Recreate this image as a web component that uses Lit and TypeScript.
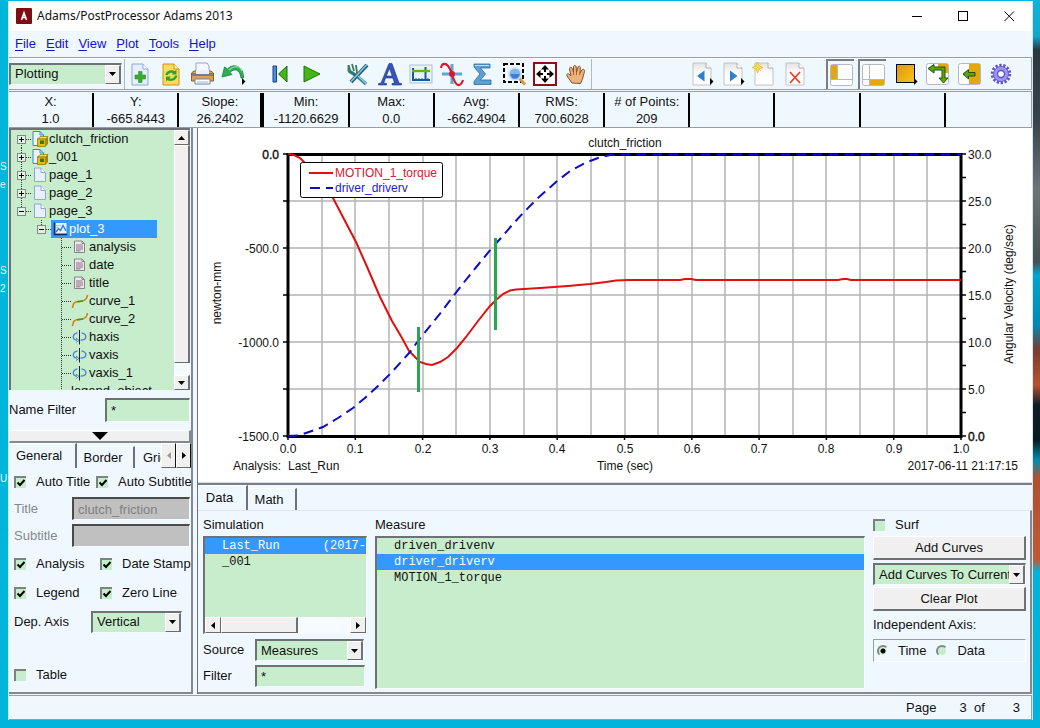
import { LitElement, html, svg, css, nothing } from "lit";
import { customElement, property } from "lit/decorators.js";
import { classMap } from "lit/directives/class-map.js";

/* ---------- icons, all on a 26 x 26 grid unless noted ---------- */

const grayPage = svg`
  <path d="M4 2H17L22 7V24H4Z" fill="url(#gp)" stroke="#c4c4c4"/>
  <path d="M17 2V7H22" fill="#fff" stroke="#b0b0b0"/>`;

const smallArrow = svg`<path d="M21 17L24.500 20.500L21 24Z" fill="#000"/>`;

const icons: Record<string, unknown> = {
  newPage: svg`
    <path d="M4 3H15L20 8V24H4Z" fill="#e6effc" stroke="#8ba7d8"/>
    <path d="M15 3V8H20" fill="#fff" stroke="#8ba7d8"/>
    <path d="M10.500 10.500h3.500v3.500h3.500v4H14v3.500h-3.500V18H7v-4h3.500Z" fill="#3aab2c" stroke="#2b8f22" stroke-width=".6"/>`,
  refresh: svg`
    <path d="M4 3H15L20 8V24H4Z" fill="#ffd95e" stroke="#c9920e"/>
    <path d="M15 3V8H20" fill="#fff3c0" stroke="#c9920e"/>
    <path d="M7.500 14a5 4.500 0 0 1 8-2.500M17 14.500a5 4.500 0 0 1-8.500 3" fill="none" stroke="#35a02a" stroke-width="2.400"/>
    <path d="M17.500 8.500V13.500H12.500ZM7 20.500V15.500H12Z" fill="#35a02a"/>`,
  print: svg`
    <path d="M6 2H17L19 5V12H6Z" fill="#f5f9ff" stroke="#8ca6cf"/>
    <path d="M1.500 12L4 10H21L23.500 12V20H1.500Z" fill="#d9a05a" stroke="#8e5f2c"/>
    <path d="M2 12H23V15H2Z" fill="#6f7c9c"/>
    <path d="M6 9H19V13H6Z" fill="#e8f0fc"/>
    <path d="M5 18H20V23H5Z" fill="#fff" stroke="#6d83ad"/>
    <path d="M7 21H18" stroke="#9eb3d8"/>`,
  undo: svg`
    <path d="M22.500 17C23 6 13 1 6.500 8L3.500 6L1 16L11 13.500L9 11.500C13 7 19 8 20 17Z" fill="#2fae55" stroke="#14813a" stroke-width=".8"/>
    <path d="M8 9C13 4 19 4.500 21 10" stroke="#8be0a2" fill="none" stroke-width="1.200"/>${smallArrow}`,
  first: svg`
    <path d="M5 5H8.500V21H5Z" fill="#4a90e0" stroke="#173f86"/>
    <path d="M19 5V21L10.500 13Z" fill="#45b618" stroke="#256d0c"/>`,
  play: svg`<path d="M5 5L21 13L5 21Z" fill="#45b618" stroke="#256d0c"/>`,
  tools: svg`
    <path d="M3 10L11 15L20 23" fill="none" stroke="#2b7f9a" stroke-width="3.400"/>
    <path d="M2.500 4L4 9M6 3L8 10M10 4L11 12M2.500 4V10L9 14" fill="none" stroke="#397a58" stroke-width="1.800"/>
    <path d="M21 4L5 21" stroke="#27556b" stroke-width="4"/>
    <path d="M21 3.500L5 20.500" stroke="#78c7dd" stroke-width="1.800"/>
    <path d="M12 15L20 22.500" stroke="#9cd4e2" stroke-width="1.200"/>`,
  letter: svg`
    <path fill-rule="evenodd" d="M1.500 24V22.500L4 22L12 2.500H15L22 22L24.500 22.500V24H15V22.500L17.500 22L15.800 17H8.600L6.800 22L9.500 22.500V24ZM9.300 15H15.200L12.500 7.500Z" fill="#3553b8" stroke="#1e3385" stroke-width=".6"/>`,
  plot: svg`
    <rect x="2" y="4" width="22" height="18" fill="#eaf4fd" stroke="#a9bfd2"/>
    <path d="M5 7V19H22M17.500 6V19" stroke="#185a9c" stroke-width="2" fill="none"/>
    <path d="M4 10H22" stroke="#5fb516" stroke-width="2.400"/>
    <path d="M8 17v2M11 17v2M14 17v2M20 17v2" stroke="#185a9c"/>`,
  sine: svg`
    <path d="M13 3V23M3 13H23" stroke="#5aa7d8" stroke-width="3"/>
    <path d="M2 7C3 1 8 1.500 11 8C14 15 15 23 19 24C22 24.500 23 22 24 19" fill="none" stroke="#e0142c" stroke-width="2.200"/>
    <circle cx="13" cy="13" r="3" fill="#e0142c"/>`,
  sigma: svg`
    <path d="M4 3H20V7H10.500L15.500 13L10.500 19H21V23.500H4V20.500L10 13L4 6Z" fill="#5b9fd3" stroke="#2c6ba5" stroke-width=".8"/>
    <path d="M5 4.500H19" stroke="#b9dcf2"/>`,
  zoom: svg`
    <rect x="3" y="3" width="19" height="18" fill="none" stroke="#000" stroke-width="2" stroke-dasharray="4 2"/>
    <path d="M18 17L24 23.500" stroke="#d59a3a" stroke-width="3"/>
    <circle cx="14" cy="13" r="6" fill="#7fb4ee" stroke="#cfd9e6" stroke-width="1.600"/>
    <path d="M9.500 13H18.500A4.500 4.500 0 0 1 9.500 13Z" fill="#3a7fd5"/>`,
  fit: svg`
    <rect x="2" y="2" width="22" height="22" fill="#fff" stroke="#8b0f14" stroke-width="2"/>
    <path d="M13 4L17 8.500H14V11H12V8.500H9ZM13 22L17 17.500H14V15H12V17.500H9ZM4 13L8.500 9V12H11V14H8.500V17ZM22 13L17.500 9V12H15V14H17.500V17Z" fill="#000"/>`,
  hand: svg`
    <path d="M9 22L4 15C3 13 5 12 6.500 13.500L8 15L6.500 8C6.300 6 8.500 5.500 9.200 7.500L10.500 11L10.500 6C10.500 4 13 4 13.200 6L13.500 11L15 6C15.500 4.500 17.600 5 17.400 7L17 12L19 9C20 7.500 22 8.500 21.500 10.500L19.500 18L17.500 22.500Z" fill="#eab27c" stroke="#8a5226"/>
    <path d="M10.500 11V14M13.500 11V14M16.800 12V14" stroke="#8a5226" stroke-width=".8"/>`,
  prev: svg`${grayPage}<path d="M8 15L15.500 9.500V20.500Z" fill="#2f7fd0"/>${smallArrow}`,
  next: svg`${grayPage}<path d="M17.500 15L10 9.500V20.500Z" fill="#2f7fd0"/>${smallArrow}`,
  addPage: svg`${grayPage}<path d="M6.500 1L8 5L12 6.500L8 8L6.500 12L5 8L1 6.500L5 5Z" fill="#ffe45e" stroke="#e3ae22" stroke-width=".7"/>
    <path d="M3 3L10 10M10 3L3 10" stroke="#f1c63a" stroke-width=".8"/>`,
  delPage: svg`${grayPage}<path d="M8 11L18 22M18 11L8 22" stroke="#e8432c" stroke-width="1.800"/>`,
  paneLeft: svg`
    <rect x="2.500" y="2.500" width="22" height="21" rx="2" fill="#fff" stroke="#b4b9c0"/>
    <path d="M3 17.500H24M9.500 3V17" stroke="#b4b9c0"/>
    <path d="M3 3H9V17H3Z" fill="#e2a90e"/>`,
  paneBottom: svg`
    <rect x="2.500" y="2.500" width="22" height="21" rx="2" fill="#fff" stroke="#b4b9c0"/>
    <path d="M3 17.500H24M9.500 3V24" stroke="#b4b9c0"/>
    <path d="M10 18H24V23H10Z" fill="#e2a90e"/>`,
  fill: svg`<rect x="3.500" y="3.500" width="18" height="18" fill="url(#gold)" stroke="#000"/>${smallArrow}`,
  swap: svg`
    <rect x="1.500" y="2.500" width="22" height="21" rx="2" fill="#fff" stroke="#b4b9c0"/>
    <path d="M13 3H23V12H19V7H13Z" fill="#e2a90e"/>
    <path d="M3 7.500L9 3.500V6H20V17H23L18.500 22L14 17H17V9H9V12Z" fill="#5ca60c" stroke="#24510b"/>`,
  dock: svg`
    <rect x="1.500" y="2.500" width="22" height="21" rx="2" fill="#fff" stroke="#b4b9c0"/>
    <path d="M12 3H23V23H12Z" fill="#e2a90e"/>
    <path d="M6 13L11.500 8.500V11.500H18V15H11.500V18Z" fill="#5ca60c" stroke="#24510b"/>`,
  gear: svg`
    <circle cx="12" cy="13" r="8.500" fill="none" stroke="#5e52c4" stroke-width="3.500" stroke-dasharray="2.200 1.620"/>
    <circle cx="12" cy="13" r="7.500" fill="#9d96f0" stroke="#6a60d2"/>
    <circle cx="12" cy="13" r="3.500" fill="#fff" stroke="#5e52c4" stroke-width="1.400"/>`,
};

/* tree icons, 18 x 18 */
const treeIcons: Record<string, unknown> = {
  model: svg`
    <path d="M2 1.500H9L12.500 5V15.500H2Z" fill="#e8f3fd" stroke="#2e8bc9"/>
    <path d="M9 1.500V5H12.500" fill="none" stroke="#2e8bc9"/>
    <path d="M6.500 9L9 6.500H17L15 9Z" fill="#ffe14a" stroke="#8a7300" stroke-width=".7"/>
    <path d="M6.500 9H14.500V16.500H6.500Z" fill="#e5bc10" stroke="#8a7300" stroke-width=".7"/>
    <path d="M14.500 9L17 6.500V14L14.500 16.500Z" fill="#a88500"/>
    <path d="M9 10.500H13V14H9Z" fill="#2f7a1d"/>`,
  page: svg`
    <path d="M3.500 2H10L14.500 6.500V15.500H3.500Z" fill="#e8f0fe" stroke="#94a4d8"/>
    <path d="M10 2V6.500H14.500" fill="#fff" stroke="#94a4d8"/>`,
  chart: svg`
    <path d="M4.500 3H15.500V13.500H4.500Z" fill="#e9f4ff"/>
    <path d="M3.500 2.500V14.500H16" fill="none" stroke="#0a2c66" stroke-width="1.600"/>
    <path d="M5 12L7.500 8.500L9.500 10.500L12 5.500L15 11" fill="none" stroke="#2d7fd4" stroke-width="1.400"/>
    <path d="M5 5.500H10M5 7.500H8" stroke="#9cc6f0"/>`,
  text: svg`
    <path d="M3.500 3H11L13.500 5.500V14.500H3.500Z" fill="#ece6ec" stroke="#8b848b"/>
    <path d="M11 3V5.500H13.500" fill="none" stroke="#8b848b"/>
    <path d="M5 7H11.500M5 9H12M5 11H12M5 12.800H9.500" stroke="#8c7383"/>`,
  curve: svg`
    <path d="M1.500 16C2 11 3.500 9.500 8 9.500C13 9.500 16 8 16.500 3" fill="none" stroke="#dc7c10" stroke-width="1.600"/>
    <path d="M6 9.700C8 9.500 10 9.500 12 8.700" fill="none" stroke="#3e9a1d" stroke-width="1.600"/>`,
  axis: svg`
    <path d="M8.500 2V16.500" stroke="#222"/>
    <path d="M10.500 4.800C16.500 6 16.500 12 9.500 12.200M6.500 4.800C1 6 1 11.500 6 12.200" fill="none" stroke="#4384d6" stroke-width="1.300"/>
    <path d="M5 10L8 12.400L5 14.500" fill="none" stroke="#4384d6"/>`,
};

interface TreeRow { label: string; level: number; icon?: string; box?: "+" | "-"; selected?: boolean }

const TREE: TreeRow[] = [
  { label: "clutch_friction", level: 1, icon: "model", box: "+" },
  { label: "_001", level: 1, icon: "model", box: "+" },
  { label: "page_1", level: 1, icon: "page", box: "+" },
  { label: "page_2", level: 1, icon: "page", box: "+" },
  { label: "page_3", level: 1, icon: "page", box: "-" },
  { label: "plot_3", level: 2, icon: "chart", box: "-", selected: true },
  { label: "analysis", level: 3, icon: "text" },
  { label: "date", level: 3, icon: "text" },
  { label: "title", level: 3, icon: "text" },
  { label: "curve_1", level: 3, icon: "curve" },
  { label: "curve_2", level: 3, icon: "curve" },
  { label: "haxis", level: 3, icon: "axis" },
  { label: "vaxis", level: 3, icon: "axis" },
  { label: "vaxis_1", level: 3, icon: "axis" },
  { label: "legend_object", level: 3 },
];

const base = css`
  * { box-sizing: border-box; }
  button, input, select { font: inherit; color: inherit; margin: 0; padding: 0; border: 0; border-radius: 0; background: none; outline: 0; }
  .btn { display: flex; align-items: center; justify-content: center; background: #f0f0f0; border: 1px solid; border-color: #fff #6a6a6a #6a6a6a #fff; }
  .sunken { border: 2px solid; border-color: #6e7276 #f7fbff #f7fbff #6e7276; border-right-width: 1px; border-bottom-width: 1px; background: #c7edcc; }
`;

/* ---------- drop-down ---------- */
@customElement("combo-box")
export class ComboBox extends LitElement {
  @property() value = "";
  @property() name = "";
  static styles = [base, css`
    :host { display: block; }
    .combo { display: grid; grid-template-columns: 1fr 16px; height: 22px; }
    select { grid-area: 1 / 1 / 2 / 3; appearance: none; width: 100%; height: 100%; min-width: 0; padding-left: 4px; font-size: 13px; border: 0; background: transparent; color: #111; }
    .arrow { grid-area: 1 / 2; pointer-events: none; border-right: 2px solid #6e7276; }
  `];
  render() {
    return html`<div class="combo sunken">
      <select aria-label=${this.name}><option>${this.value}</option></select>
      <span class="btn arrow"><svg width="7" height="4"><path d="M0 0H7L3.500 4Z"/></svg></span>
    </div>`;
  }
}

/* ---------- model tree ---------- */
@customElement("model-tree")
export class ModelTree extends LitElement {
  static styles = [base, css`
    :host { display: flex; min-height: 0; overflow: hidden; }
    .frame { flex: 1; display: flex; min-width: 0; overflow: hidden; border: 0 solid #6e7276; border-width: 2px 0 0 2px; background: #c7edcc; }
    .rows { flex: 1; min-width: 0; list-style: none; margin: 0; padding: 0; overflow: hidden; }
    .row { display: flex; height: 18px; line-height: 18px; }
    .row svg { flex: none; display: block; }
    .item { display: flex; white-space: nowrap; }
    .selected .item { width: 106px; background: #39f; color: #fff; }
    .bar { width: 16px; display: flex; flex-direction: column; background: #f6fbff; }
    .bar .btn { width: 16px; height: 15px; flex: none; border-right: 2px solid #6e7276; }
    .bar .thumb { height: auto; flex: 18; }
    .trough { flex: 1; }
  `];
  private gutter(r: TreeRow, i: number) {
    const w = r.level * 20;
    const cx = w - 9.5;
    const last = i === 4 || i === 5;
    return svg`<svg width=${w} height="18" fill="none" stroke="#333">
      <path d=${`M${cx} ${i === 0 ? 9 : 0}V${last ? 9 : 18}`} stroke-dasharray="1 1"/>
      ${r.icon ? svg`<path d=${`M${cx + 0.5} 9.5H${w}`} stroke-dasharray="1 1"/>` : nothing}
      ${r.box ? svg`<rect x=${cx - 4} y="5.500" width="8" height="8" fill="#dff3e2" stroke="#888"/>
        <path d=${`M${cx - 2.5} 9.5h5${r.box === "+" ? "m-2.5 -2.5v5" : ""}`} stroke="#000"/>` : nothing}
    </svg>`;
  }
  render() {
    return html`<div class="frame">
      <ul class="rows" role="tree">
        ${TREE.map((r, i) => html`<li class=${classMap({ row: true, selected: !!r.selected })} role="treeitem">
          ${this.gutter(r, i)}
          <span class="item">${r.icon ? html`<svg width="18" height="18">${treeIcons[r.icon]}</svg>` : nothing}${r.label}</span>
        </li>`)}
      </ul>
      <div class="bar">
        <button class="btn" aria-label="Scroll up"><svg width="7" height="4"><path d="M0 4H7L3.500 0Z"/></svg></button>
        <div class="btn thumb"></div><div class="trough"></div>
        <button class="btn" aria-label="Scroll down"><svg width="7" height="4"><path d="M0 0H7L3.500 4Z"/></svg></button>
      </div>
    </div>`;
  }
}

/* ---------- the plot ---------- */
type Pt = [number, number];
const PLOT = { w: 673, h: 282 };

/* samples in plot units, origin in the top left corner of the axes */
const TORQUE: Pt[] = [[0, 0], [6, 1], [12, 4], [22, 14], [34, 28], [45, 44], [57, 67], [68, 88], [80, 115], [92, 143], [104, 167], [114, 184], [121, 197], [127, 203], [132, 208], [138, 210], [144, 211], [152, 208], [160, 203], [169, 194], [178, 183], [190, 167], [202, 152], [208, 146], [215, 140], [222, 136.5], [228, 135.5], [236, 135], [252, 134], [280, 132], [302, 130], [318, 128], [328, 126.5], [340, 126], [392, 126], [397, 125], [403, 125], [408, 126], [550, 126], [555, 125], [559, 125], [563, 126], [673, 126]];
const VELOCITY: Pt[] = [[0, 282], [10, 281.5], [15, 280], [35, 273], [50, 264], [65, 254], [78, 243], [90, 232], [102, 220], [113, 208], [122, 198], [130, 187], [142, 172], [151, 161], [163, 145], [177, 127], [190, 111], [203, 95], [212, 85], [225, 70], [237, 57], [250, 44], [268, 28], [282, 17], [297, 9], [310, 4], [322, 1], [332, 0.5], [352, 0.5], [673, 0.5]];
const line = (p: Pt[]) => p.map((q) => q.join(",")).join(" ");
const range = (n: number) => Array.from({ length: n }, (_, i) => i);

@customElement("plot-view")
export class PlotView extends LitElement {
  static styles = css`
    :host { display: block; background: #fff; }
    svg { display: block; width: 100%; height: auto; }
    text { font: 12px "Liberation Sans", Arial, sans-serif; fill: #111; }
    .strong { stroke: #111; stroke-width: .4px; }
    .mid { text-anchor: middle; }
    .end { text-anchor: end; }
    .red { fill: #d42030; }
    .blue { fill: #1c1ccc; }
    .grid { stroke: #b4b4b4; stroke-width: 1.500px; fill: none; }
    .tick { stroke: #000; stroke-width: 1.500px; fill: none; }
    .axes { stroke: #000; stroke-width: 3px; fill: none; }
    .torque { stroke: #e01010; stroke-width: 2px; fill: none; }
    .velocity { stroke: #0c0cc8; stroke-width: 2px; fill: none; stroke-dasharray: 10 6; }
    .marker { stroke: #2aa650; stroke-width: 3px; }
    .key { fill: #fff; stroke: #000; }
  `;
  render() {
    const { w, h } = PLOT;
    const dx = w / 20;
    const dy = h / 6;
    return html`<svg viewBox="0 0 834 354" role="img" aria-label="clutch_friction">
      <text class="mid" x="427" y="19">clutch_friction</text>
      <g transform="translate(90 26)">
        <path class="grid" d=${range(19).map((i) => `M${Math.round((i + 1) * dx)} 0V${h}`).join("") + range(5).map((i) => `M0 ${(i + 1) * dy}H${w}`).join("")}/>
        <path class="tick" d=${range(7).map((i) => `M-5 ${i * dy}H0`).join("") + range(13).map((i) => `M${w} ${i * dy / 2}h5`).join("") + range(11).map((i) => `M${i * 2 * dx} ${h}v4`).join("")}/>
        <rect class="axes" x="0" y="0.500" width=${w} height=${h}/>
        <polyline class="torque" points=${line(TORQUE)}/>
        <polyline class="velocity" points=${line(VELOCITY)}/>
        <path class="marker" d="M130.500 173V238M207.500 84V176"/>
        <rect class="key" x="12.500" y="8.500" width="142" height="35" rx="2"/>
        <path class="torque" d="M21 19H45"/>
        <path class="velocity" d="M22 34H45"/>
        <text class="red" x="47" y="23">MOTION_1_torque</text>
        <text class="blue" x="47" y="38">driver_driverv</text>
        ${["0.0", "-500.0", "-1000.0", "-1500.0"].map((t, i) => svg`<text class=${i ? "end" : "end strong"} x="-9" y=${i * 2 * dy + 5}>${t}</text>`)}
        ${range(7).map((i) => svg`<text class=${i < 6 ? "" : "strong"} x="680" y=${i * dy + 5}>${(30 - i * 5).toFixed(1)}</text>`)}
        ${range(11).map((i) => svg`<text class="mid" x=${Math.round(i * 2 * dx)} y="299">${(i / 10).toFixed(1)}</text>`)}
      </g>
      <text class="mid" transform="translate(23 165) rotate(-90)">newton-mm</text>
      <text class="mid" transform="translate(815 166) rotate(-90)">Angular Velocity (deg/sec)</text>
      <text x="35" y="342">Analysis:</text><text x="90" y="342">Last_Run</text>
      <text class="mid" x="427" y="342">Time (sec)</text>
      <text class="end" x="820" y="342">2017-06-11 21:17:15</text>
    </svg>`;
  }
}

const STATS = [["X:", "1.0"], ["Y:", "-665.8443"], ["Slope:", "26.2402"], ["Min:", "-1120.6629"], ["Max:", "0.0"], ["Avg:", "-662.4904"], ["RMS:", "700.6028"], ["# of Points:", "209"], ["", ""], ["", ""], ["", ""], ["", ""]];

@customElement("app-root")
export class AppRoot extends LitElement {
  static styles = [base, css`
    :host {
      display: block; position: relative; min-height: 100vh; padding: 1px 7px 8px 8px; overflow: hidden;
      font: 13px/16px "Liberation Sans", Arial, sans-serif; color: #111;
      background:
        radial-gradient(ellipse 34px 7px at 820px 100%, #a8704a 0 40%, transparent 100%) no-repeat,
        linear-gradient(#10b4d8 0, #10a8cc 36px, #2a3840 50px, #39424a 120px, #6c7478 190px, #46504f 262px, #00a5cc 275px, #0088b0 325px, #7a3c2c 350px, #b5532c 385px, #101c24 405px, #0a1820 440px, #008cae 460px, #b05030 478px, #c05a34 560px, #00b4da 572px) right / 7px 100% no-repeat,
        #00b4da;
    }
    .desk { position: absolute; left: 0; width: 8px; color: #e8fbff; font-size: 10px; line-height: 18px; }
    .desk.a { top: 158px; } .desk.b { top: 262px; } .desk.c { top: 470px; }
    .window { position: relative; background: #f0f8ff; border: 0 solid #cfe6f2; border-width: 0 1px; display: flex; flex-direction: column; min-height: calc(100vh - 9px); }

    .title { display: flex; height: 30px; background: #fff; align-items: center; font: 12px/16px "Noto Sans", "Open Sans", sans-serif; padding-left: 7px; gap: 5px; }
    .name { flex: 1; }
    .title button { width: 46px; height: 30px; display: grid; place-items: center; }
    .title button:first-of-type { margin-right: -5px; }
    .title button:last-of-type { margin-left: -5px; }
    .menu { display: flex; height: 26px; align-items: center; gap: 10px; padding-left: 6px; }
    .menu a { color: #1010d8; text-decoration: none; }
    .menu u { text-underline-offset: 2px; }

    .tools { display: flex; height: 33px; align-items: center; border: 1px solid #9a9ea2; border-left: 0; box-shadow: inset 0 1px #fff; }
    .mode { width: 113px; margin-right: 2px; }
    .group { display: flex; height: 30px; border-left: 1px solid #b4b8bc; }
    .group.open { border-left: 0; }
    .group button { width: 31px; height: 30px; display: grid; place-items: center; }
    .space { width: 16px; }
    .wide button { width: 32px; }
    .group button.pressed { border: 2px solid; border-color: #7b7f84 #fff #fff #7b7f84; border-right: 0; border-bottom: 0; width: 28px; margin: 0 4px 0 0; }
    .push { margin-left: auto; }
    .end { margin-right: 13px; }

    .stats { display: grid; grid-template-columns: repeat(12, 1fr); height: 37px; margin-top: 1px; border: 1px solid #9a9ea2; border-left: 0; }
    .stat { text-align: center; line-height: 17px; margin: 1px 0 0; border-right: 2px solid #000; height: 34px; white-space: nowrap; }
    .stat.thick { border-right-width: 4px; }
    .stat:last-child { border: 0; }

    .main { display: grid; grid-template-columns: 184px minmax(0, 1fr); flex: 1; column-gap: 4px; }
    .side { display: flex; flex-direction: column; min-width: 0; border-right: 2px solid #85898d; border-bottom: 2px solid #85898d; padding-bottom: 3px; }
    .side model-tree { flex: 1 1 260px; height: 260px; margin-right: 1px; }
    .filter { display: flex; align-items: center; height: 40px; }
    .filter label { width: 96px; }
    .field { height: 24px; flex: 1; min-width: 0; width: 0; padding-left: 4px; }
    .side .field { margin-right: 1px; }
    .collapse { height: 13px; border-right: 2px solid #85898d; border-bottom: 2px solid #85898d; }

    .tabs { display: flex; height: 25px; overflow: hidden; }
    .tab { border-right: 2px solid #6e7276; height: 23px; margin-top: 3px; padding: 0 9px; text-align: center; border-top: 1px solid #fff; }
    .tab.on { height: 25px; margin-top: 0; }
    .tab.t-gen { width: 68px; padding: 0 13px 0 7px; } .tab.t-bor { width: 58px; padding: 0 7px 0 3px; line-height: 20px; } .tab.t-gri { flex: 1; min-width: 0; overflow: hidden; padding: 0 0 0 8px; text-align: left; border-right: 0; line-height: 20px; }
    .tabs .btn { width: 15px; height: 25px; flex: none; border-right-color: #111; }
    .form { overflow: hidden; }
    .line { display: flex; align-items: center; height: 29px; padding-left: 5px; white-space: nowrap; }
    .line.short { height: 27px; }
    .line .left { width: 86px; flex: none; }
    .line .near { width: 82px; }
    .line .cap { width: 58px; flex: none; color: #85888c; }
    .line .off { background: #c0c0c0; color: #808080; height: 23px; border-color: #4a4a4a #f7fbff #f7fbff #4a4a4a; }
    .line .dep { width: 77px; flex: none; }
    .line combo-box { width: 91px; }
    .gap { margin-top: 24px; }
    .check { display: flex; align-items: center; gap: 10px; }
    input[type="checkbox"] { appearance: none; width: 12px; height: 12px; flex: none; border: solid #7c8480; border-width: 2px 0 0 2px; background: #c7edcc; }
    input[type="checkbox"]:checked { background: #c7edcc url("data:image/svg+xml,%3Csvg xmlns='http://www.w3.org/2000/svg' width='10' height='10'%3E%3Cpath d='M1.500 4.500L4 7L8.500 2' fill='none' stroke='%23000' stroke-width='2'/%3E%3C/svg%3E") no-repeat; }
    input[type="radio"] { appearance: none; width: 12px; height: 12px; flex: none; border-radius: 6px; border: 2px solid; border-color: #808884 #f0f8ff #f0f8ff #808884; background: #c7edcc; }
    input[type="radio"]:checked { background: radial-gradient(circle, #000 0 2px, #d8f2dc 3px); }

    .work { display: flex; flex-direction: column; border-left: 1px solid #6e7276; min-width: 0; }
    .sash { height: 3px; border-top: 1px solid #d5dde4; border-bottom: 2px solid #7b7f83; }
    .lower { flex: 1; display: flex; flex-direction: column; border-bottom: 2px solid #85898d; }
    .lower .on { width: 50px; padding: 0 5px 0 0; line-height: 20px; }
    .lower .second { width: 49px; padding: 0 5px 0 0; line-height: 18px; }
    .pane { flex: 1; display: grid; grid-template-columns: 164px minmax(0, 1fr) 153px; column-gap: 8px; padding: 5px 4px 3px 5px; border-top: 1px solid #dfe7ee; border-right: 2px solid #85898d; }
    .col { display: flex; flex-direction: column; min-width: 0; }
    .cap2 { height: 20px; line-height: 17px; }
    .list { list-style: none; margin: 0; padding: 0; font: 12px/16px "Liberation Mono", "Courier New", monospace; overflow: hidden; white-space: pre; }
    .list li { padding-left: 17px; height: 16px; }
    .list .sel { background: #39f; color: #fff; }
    .sim { height: 98px; display: flex; flex-direction: column; overflow: hidden; }
    .sim .list { flex: 1; }
    .hbar { display: flex; height: 16px; background: #f6fbff; }
    .hbar .btn { width: 16px; }
    .hbar .thumb { width: 77px; margin-right: auto; border-right: 2px solid #6e7276; }
    .measures { flex: 1; }
    .pair { display: flex; align-items: center; height: 23px; margin-top: 3px; }
    .pair.first { height: 22px; margin-top: 5px; }
    .pair label, .pair span { width: 52px; flex: none; }
    .pair combo-box { width: 109px; }
    .pair .field { height: 22px; flex: none; width: 110px; }
    .action { height: 24px; width: 100%; border-right: 2px solid #6e7276; border-bottom: 2px solid #6e7276; }
    .actions { gap: 2px; }
    .actions combo-box { margin-top: 1px; }
    .actions .cap2 { height: 18px; }
    .ind { margin-top: 4px; }
    .radios { display: flex; align-items: center; height: 23px; gap: 10px; margin-top: 4px; padding-left: 3px; border: 1px solid; border-color: #9a9ea2 #fff #fff #9a9ea2; }
    .radios .check { gap: 9px; }

    .status { display: flex; justify-content: flex-end; align-items: center; height: 25px; margin-top: 1px; border: 1px solid #9a9ea2; border-left: 0; padding-right: 11px; white-space: pre; }
    .status .page { margin-right: 23px; } .status .of { margin-right: 28px; }
  `];

  private tool(name: string, label: string, pressed = false) {
    return html`<button class=${classMap({ pressed })} aria-label=${label}><svg width="26" height="26" viewBox="0 0 26 26">
      <defs>
        <linearGradient id="gp" x2="0" y2="1"><stop offset="0" stop-color="#e2e2e2"/><stop offset=".4" stop-color="#fafafa"/><stop offset="1" stop-color="#fff"/></linearGradient>
        <linearGradient id="gold" x2="1" y2="1"><stop offset="0" stop-color="#d99a08"/><stop offset="1" stop-color="#fbc41c"/></linearGradient>
      </defs>${icons[name]}</svg></button>`;
  }
  private menu(word: string) {
    return html`<a href="#"><u>${word[0]}</u>${word.slice(1)}</a>`;
  }
  private check(label: string, on = true) {
    return html`<label class="check"><input type="checkbox" .checked=${on}>${label}</label>`;
  }

  render() {
    return html`
      <div class="desk a">S<br>e</div><div class="desk b">S<br>2</div><div class="desk c">U</div>
      <div class="window">
        <header class="title">
          <svg width="16" height="16"><rect width="16" height="16" rx="1" fill="#7d0d12"/><path d="M5.500 12L8 5L10.500 12M6.200 9.500H9.800" fill="none" stroke="#fff" stroke-width="1.600"/></svg>
          <span class="name">Adams/PostProcessor Adams 2013</span>
          <button aria-label="Minimize"><svg width="11" height="11"><path d="M0 5.500H10" stroke="#000"/></svg></button>
          <button aria-label="Maximize"><svg width="11" height="11"><rect x=".5" y=".5" width="9" height="9" fill="none" stroke="#000"/></svg></button>
          <button aria-label="Close"><svg width="11" height="11"><path d="M.5 .5L10 10M10 .5L.5 10" stroke="#000"/></svg></button>
        </header>
        <nav class="menu">${["File", "Edit", "View", "Plot", "Tools", "Help"].map((m) => this.menu(m))}</nav>

        <div class="tools">
          <combo-box class="mode" name="Mode" value="Plotting"></combo-box>
          <div class="group">
            ${this.tool("newPage", "New")}${this.tool("refresh", "Reload")}${this.tool("print", "Print")}${this.tool("undo", "Undo")}
            <span class="space"></span>
            ${this.tool("first", "Rewind")}${this.tool("play", "Play")}
            <span class="space"></span>
            ${this.tool("tools", "Tools")}${this.tool("letter", "Text")}${this.tool("plot", "Plot")}${this.tool("sine", "Curve")}${this.tool("sigma", "Statistics")}${this.tool("zoom", "Zoom")}${this.tool("fit", "Fit")}${this.tool("hand", "Pan")}
          </div>
          <div class="group"></div>
          <div class="group open push">
            ${this.tool("prev", "Previous page")}${this.tool("next", "Next page")}${this.tool("addPage", "Add page")}${this.tool("delPage", "Delete page")}
            <span class="space"></span>
          </div>
          <div class="group open wide end">
            ${this.tool("paneLeft", "Tree view", true)}${this.tool("paneBottom", "Dashboard", true)}${this.tool("fill", "Layout")}${this.tool("swap", "Swap")}${this.tool("dock", "Dock")}${this.tool("gear", "Settings")}
          </div>
        </div>

        <div class="stats">
          ${STATS.map(([k, v], i) => html`<div class=${classMap({ stat: true, thick: i === 2 })}>${k}<br>${v}</div>`)}
        </div>

        <div class="main">
          <aside class="side">
            <model-tree></model-tree>
            <div class="filter"><label for="nf">Name Filter</label><input id="nf" class="field sunken" value="*"></div>
            <button class="btn collapse" aria-label="Collapse"><svg width="16" height="8"><path d="M0 0H16L8 8Z"/></svg></button>
            <div class="tabs">
              <button class="tab on t-gen">General</button>
              <button class="tab t-bor">Border</button>
              <button class="tab t-gri">Grid</button>
              <button class="btn" aria-label="Tabs left"><svg width="4" height="7"><path d="M4 0V7L0 3.500Z" fill="#999"/></svg></button>
              <button class="btn" aria-label="Tabs right"><svg width="4" height="7"><path d="M0 0V7L4 3.500Z"/></svg></button>
            </div>
            <div class="form">
              <div class="line short"><div class="left near">${this.check("Auto Title")}</div>${this.check("Auto Subtitle")}</div>
              <div class="line short"><label class="cap" for="ti">Title</label><input id="ti" class="field sunken off" value="clutch_friction" disabled></div>
              <div class="line short"><label class="cap" for="su">Subtitle</label><input id="su" class="field sunken off" disabled></div>
              <div class="line"><div class="left">${this.check("Analysis")}</div>${this.check("Date Stamp")}</div>
              <div class="line"><div class="left">${this.check("Legend")}</div>${this.check("Zero Line")}</div>
              <div class="line"><span class="dep">Dep. Axis</span><combo-box name="Dep. Axis" value="Vertical"></combo-box></div>
              <div class="line gap">${this.check("Table", false)}</div>
            </div>
          </aside>

          <section class="work">
            <plot-view></plot-view>
            <div class="sash"></div>
            <div class="lower">
              <div class="tabs"><button class="tab on">Data</button><button class="tab second">Math</button></div>
              <div class="pane">
                <div class="col">
                  <span class="cap2">Simulation</span>
                  <div class="sim sunken">
                    <ul class="list" role="listbox" aria-label="Simulation"><li class="sel" role="option">Last_Run      (2017-</li><li role="option">_001</li></ul>
                    <div class="hbar">
                      <button class="btn" aria-label="Scroll left"><svg width="4" height="7"><path d="M4 0V7L0 3.500Z"/></svg></button>
                      <div class="btn thumb"></div>
                      <button class="btn" aria-label="Scroll right"><svg width="4" height="7"><path d="M0 0V7L4 3.500Z"/></svg></button>
                    </div>
                  </div>
                  <div class="pair first"><span>Source</span><combo-box name="Source" value="Measures"></combo-box></div>
                  <div class="pair"><label for="fi">Filter</label><input id="fi" class="field sunken" value="*"></div>
                </div>
                <div class="col">
                  <span class="cap2">Measure</span>
                  <ul class="list sunken measures" role="listbox" aria-label="Measure"><li role="option">driven_drivenv</li><li class="sel" role="option">driver_driverv</li><li role="option">MOTION_1_torque</li></ul>
                </div>
                <div class="col actions">
                  <div class="cap2">${this.check("Surf", false)}</div>
                  <button class="btn action">Add Curves</button>
                  <combo-box name="Target" value="Add Curves To Current"></combo-box>
                  <button class="btn action">Clear Plot</button>
                  <span class="ind">Independent Axis:</span>
                  <div class="radios">
                    <label class="check"><input type="radio" name="ax" checked>Time</label>
                    <label class="check"><input type="radio" name="ax">Data</label>
                  </div>
                </div>
              </div>
            </div>
          </section>
        </div>

        <footer class="status"><span class="page">Page</span><span class="of">3  of</span><span>3</span></footer>
      </div>`;
  }
}
